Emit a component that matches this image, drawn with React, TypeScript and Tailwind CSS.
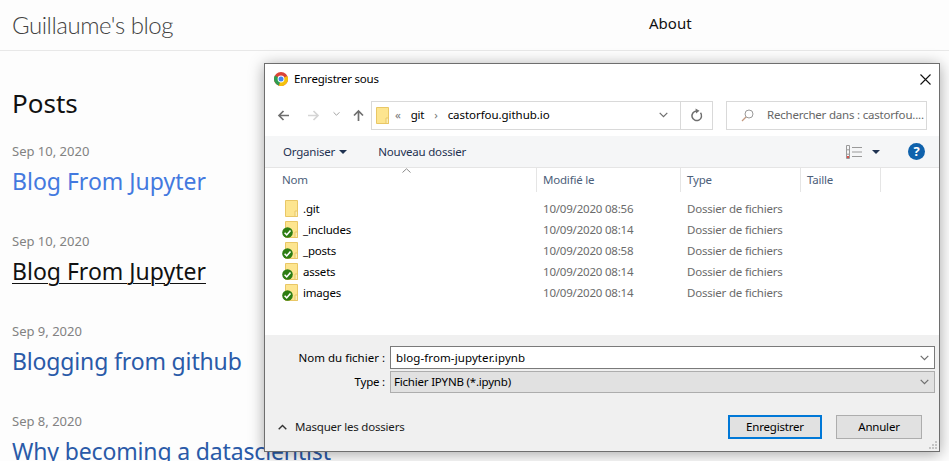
import React from "react";

const uiFont = "font-['Noto_Sans','Open_Sans',sans-serif]";

const posts = [
    { date: "Sep 10, 2020", title: "Blog From Jupyter", cls: "tracking-[0px] text-[#4379df]" },
    { date: "Sep 10, 2020", title: "Blog From Jupyter", cls: "tracking-[0px] text-[#111] underline decoration-1 underline-offset-[3px]" },
    { date: "Sep 9, 2020", title: "Blogging from github", cls: "tracking-[-0.15px] text-[#2a5aa8]" },
    { date: "Sep 8, 2020", title: "Why becoming a datascientist", cls: "tracking-[-0.15px] text-[#2a5aa8]" },
];

const files = [
    { name: ".git", date: "10/09/2020 08:56", synced: false },
    { name: "_includes", date: "10/09/2020 08:14", synced: true },
    { name: "_posts", date: "10/09/2020 08:58", synced: true },
    { name: "assets", date: "10/09/2020 08:14", synced: true },
    { name: "images", date: "10/09/2020 08:14", synced: true },
];

function ChromeLogo() {
    return (
        <svg width="14" height="14" viewBox="0 0 14 14">
            <circle cx="7" cy="7" r="7" fill="#db4437" />
            <path d="M7 7 L0.9 3.500 A7 7 0 0 0 5 13.700 Z" fill="#2f9e4f" />
            <path d="M7 7 L13.300 4 A7 7 0 0 1 5 13.700 Z" fill="#f4c20d" />
            <circle cx="7" cy="7" r="3.400" fill="#fff" />
            <circle cx="7" cy="7" r="2.500" fill="#4285f4" />
        </svg>
    );
}

function Folder() {
    return (
        <svg width="13" height="17" viewBox="0 0 13 17" className="shrink-0">
            <path d="M.5.5h12v16H.5z" fill="#fde58f" stroke="#e9c766" />
            <path d="M10 11h2.500v5.500H10z" fill="#fbeeb8" stroke="#e9c766" />
        </svg>
    );
}

function SyncBadge() {
    return (
        <svg width="11" height="11" viewBox="0 0 11 11" className="absolute left-[-3px] bottom-[0px]">
            <circle cx="5.500" cy="5.500" r="5.300" fill="#2d7d13" />
            <path d="M2.600 5.800 L4.700 7.900 L8.500 3.400" fill="none" stroke="#fff" strokeWidth="1.600" />
        </svg>
    );
}

function Arrow({ dir, color }: { dir: "left" | "right" | "up"; color: string }) {
    const d = {
        left: "M12 6.500H2M6.500 2 2 6.500 6.500 11",
        right: "M1 6.500h10M6.500 2 11 6.500 6.500 11",
        up: "M6.500 12V2M2 6.500 6.500 2 11 6.500",
    }[dir];
    return (
        <svg width="13" height="13" viewBox="0 0 13 13">
            <path d={d} fill="none" stroke={color} strokeWidth="1.700" />
        </svg>
    );
}

function Chevron({ color = "#6d6d6d", width = 9 }: { color?: string; width?: number }) {
    return (
        <svg width={width} height="6" viewBox="0 0 9 6">
            <path d="M.7.8 4.500 4.600 8.300.8" fill="none" stroke={color} strokeWidth="1.200" />
        </svg>
    );
}

function Caret() {
    return (
        <svg width="8" height="4" viewBox="0 0 8 4">
            <path d="M0 0h8L4 4z" fill="#1f3251" />
        </svg>
    );
}

function SaveDialog() {
    return (
        <div className={`${uiFont} absolute left-[264px] top-[63px] flex h-[389px] w-[676px] flex-col border border-[#6e6e6e] bg-white text-[11.5px] tracking-[-0.2px] text-[#1a1a1a] shadow-[0_2px_14px_rgba(0,0,0,0.35)]`}>
            {/* title bar */}
            <div className="flex h-[30px] shrink-0 items-center pl-[9px] pr-[8px]">
                <ChromeLogo />
                <span className="ml-[6px] flex-1 text-black">Enregistrer sous</span>
                <svg width="11" height="11" viewBox="0 0 11 11">
                    <path d="M.5.5l10 10M10.500.5l-10 10" stroke="#111" strokeWidth="1.100" />
                </svg>
            </div>

            {/* nav row */}
            <div className="flex h-[42px] shrink-0 items-center pl-[12px]">
                <Arrow dir="left" color="#6f6f6f" />
                <span className="ml-[17px]"><Arrow dir="right" color="#d5d5d5" /></span>
                <span className="ml-[13px] mb-[2px]"><Chevron color="#9a9a9a" width={7} /></span>
                <span className="ml-[12px]"><Arrow dir="up" color="#6f6f6f" /></span>
                <div className="ml-[6px] flex h-[29px] w-[342px] items-center border border-[#d9d9d9] pl-[4px]">
                    <Folder />
                    <span className="ml-[6px] text-[#777]">«</span>
                    <span className="ml-[10px] text-black">git</span>
                    <span className="ml-[10px] text-[#777]">›</span>
                    <span className="ml-[10px] tracking-[-0.05px] text-black">castorfou.github.io</span>
                    <span className="ml-auto mr-[12px]"><Chevron /></span>
                    <div className="flex h-full w-[32px] items-center justify-center border-l border-[#d9d9d9]">
                        <svg width="13" height="14" viewBox="0 0 13 14">
                            <path d="M10.500 4.800A4.800 4.800 0 1 1 6.500 3" fill="none" stroke="#6f6f6f" strokeWidth="1.500" />
                            <path d="M5.500.5 9.500 2.800 6 5.500z" fill="#6f6f6f" />
                        </svg>
                    </div>
                </div>
                <div className="ml-[13px] flex h-[29px] w-[201px] items-center border border-[#d9d9d9] pl-[14px]">
                    <svg width="13" height="13" viewBox="0 0 13 13" className="shrink-0">
                        <circle cx="8" cy="5" r="4" fill="none" stroke="#9a9a9a" />
                        <path d="M5 8 1 12" stroke="#c49a80" strokeWidth="1.200" />
                    </svg>
                    <span className="ml-[13px] whitespace-nowrap text-[#666]">Rechercher dans : castorfou....</span>
                </div>
            </div>

            {/* toolbar */}
            <div className="flex h-[32px] shrink-0 items-center border-b border-[#e5e5e5] bg-[#f5f6f7] pl-[18px] pr-[14px] text-[#1f3251]">
                <span>Organiser</span>
                <span className="ml-[4px]"><Caret /></span>
                <span className="ml-[31px] whitespace-nowrap">Nouveau dossier</span>
                <svg width="16" height="14" viewBox="0 0 16 14" className="ml-auto">
                    <path d="M.5.5h3v13h-3zM.5 4.800h3M.5 9.200h3" fill="none" stroke="#9a9a9a" />
                    <path d="M6 2.500h10M6 7h10M6 11.500h10" stroke="#9a9a9a" />
                    <path d="M1 11h2v2H1z" fill="#d9534f" />
                </svg>
                <span className="ml-[10px]"><Caret /></span>
                <div className="ml-[28px] flex h-[17px] w-[17px] items-center justify-center rounded-full bg-[#0f62ac] text-[13px] font-bold leading-none text-white">?</div>
            </div>

            {/* column headers */}
            <div className="relative grid h-[24px] shrink-0 grid-cols-[272px_144px_120px_80px] text-[#4c607a]">
                <div className="flex items-center border-r border-[#e5e5e5] pl-[17px]">Nom</div>
                <div className="flex items-center border-r border-[#e5e5e5] pl-[6px]">Modifié le</div>
                <div className="flex items-center border-r border-[#e5e5e5] pl-[6px]">Type</div>
                <div className="flex items-center border-r border-[#e5e5e5] pl-[6px]">Taille</div>
                <svg width="9" height="5" viewBox="0 0 9 5" className="absolute left-[137px] top-0">
                    <path d="M.5 4.500 4.500.8 8.500 4.500" fill="none" stroke="#8a8a8a" />
                </svg>
            </div>

            {/* file list */}
            <div className="flex-1 pt-[6px]">
                {files.map((f) => (
                    <div key={f.name} className="grid h-[21px] grid-cols-[271px_144px_120px] items-center">
                        <div className="flex items-center pl-[20px]">
                            <span className="relative flex"><Folder />{f.synced && <SyncBadge />}</span>
                            <span className="ml-[5px] text-black">{f.name}</span>
                        </div>
                        <div className="pl-[7px] text-[#6b6b6b]">{f.date}</div>
                        <div className="pl-[7px] text-[#6b6b6b]">Dossier de fichiers</div>
                    </div>
                ))}
            </div>

            {/* bottom panel */}
            <div className="relative h-[116px] shrink-0 bg-[#f0f0f0] pt-[11px]">
                <div className="flex h-[23px] items-center pr-[4px]">
                    <span className="w-[120px] text-right tracking-[0px] text-black">Nom du fichier :</span>
                    <div className="ml-[5px] flex h-full flex-1 items-center border border-[#7a7a7a] bg-white pl-[5px] pr-[5px] text-black">
                        <span className="flex-1 tracking-[0.1px]">blog-from-jupyter.ipynb</span>
                        <Chevron />
                    </div>
                </div>
                <div className="mt-[2px] flex h-[22px] items-center pr-[4px]">
                    <span className="w-[120px] text-right text-black">Type :</span>
                    <div className="ml-[5px] flex h-full flex-1 items-center border border-[#adadad] bg-[#e1e1e1] pl-[3px] pr-[5px] text-black">
                        <span className="flex-1">Fichier IPYNB (*.ipynb)</span>
                        <Chevron />
                    </div>
                </div>
                <div className="mt-[22px] flex h-[24px] items-center pl-[13px] pr-[17px]">
                    <svg width="9" height="6" viewBox="0 0 9 6"><path d="M.7 5.200 4.500 1.400 8.300 5.200" fill="none" stroke="#333" strokeWidth="1.400" /></svg>
                    <span className="ml-[8px] text-[#1a1a1a]">Masquer les dossiers</span>
                    <button className="ml-auto h-full w-[94px] border-2 border-[#0078d7] bg-[#e1e1e1] text-black">Enregistrer</button>
                    <button className="ml-[14px] h-full w-[86px] border border-[#adadad] bg-[#e1e1e1] text-black">Annuler</button>
                </div>
                <svg width="10" height="10" viewBox="0 0 10 10" className="absolute bottom-[1px] right-[1px]">
                    <path d="M7 1h2v2H7zM4 4h2v2H4zM7 4h2v2H7zM1 7h2v2H1zM4 7h2v2H4zM7 7h2v2H7z" fill="#c4c4c4" />
                </svg>
            </div>
        </div>
    );
}

export default function App() {
    return (
        <div className={`${uiFont} relative h-[461px] w-[949px] overflow-hidden bg-[#fdfdfd]`}>
            <header className="flex h-[51px] items-center border-b border-[#e8e8e8] pl-[12px]">
                <span className="mb-px w-[637px] font-['Lato',sans-serif] text-[24px] font-light tracking-[-0.45px] text-[#424242]">Guillaume's blog</span>
                <span className="mb-[3px] text-[15px] text-[#111]">About</span>
            </header>
            <main className="px-[12px] pt-[32px]">
                <h1 className="text-[26px] leading-[40px] text-[#111]">Posts</h1>
                <ul className="mt-[18px]">
                    {posts.map((p) => (
                        <li key={p.date + p.cls} className="h-[90px]">
                            <div className="text-[13px] leading-[20px] text-[#828282]">{p.date}</div>
                            <div className={`mt-[4px] whitespace-nowrap text-[23px] leading-[32px] ${p.cls}`}>{p.title}</div>
                        </li>
                    ))}
                </ul>
            </main>
            <SaveDialog />
        </div>
    );
}
